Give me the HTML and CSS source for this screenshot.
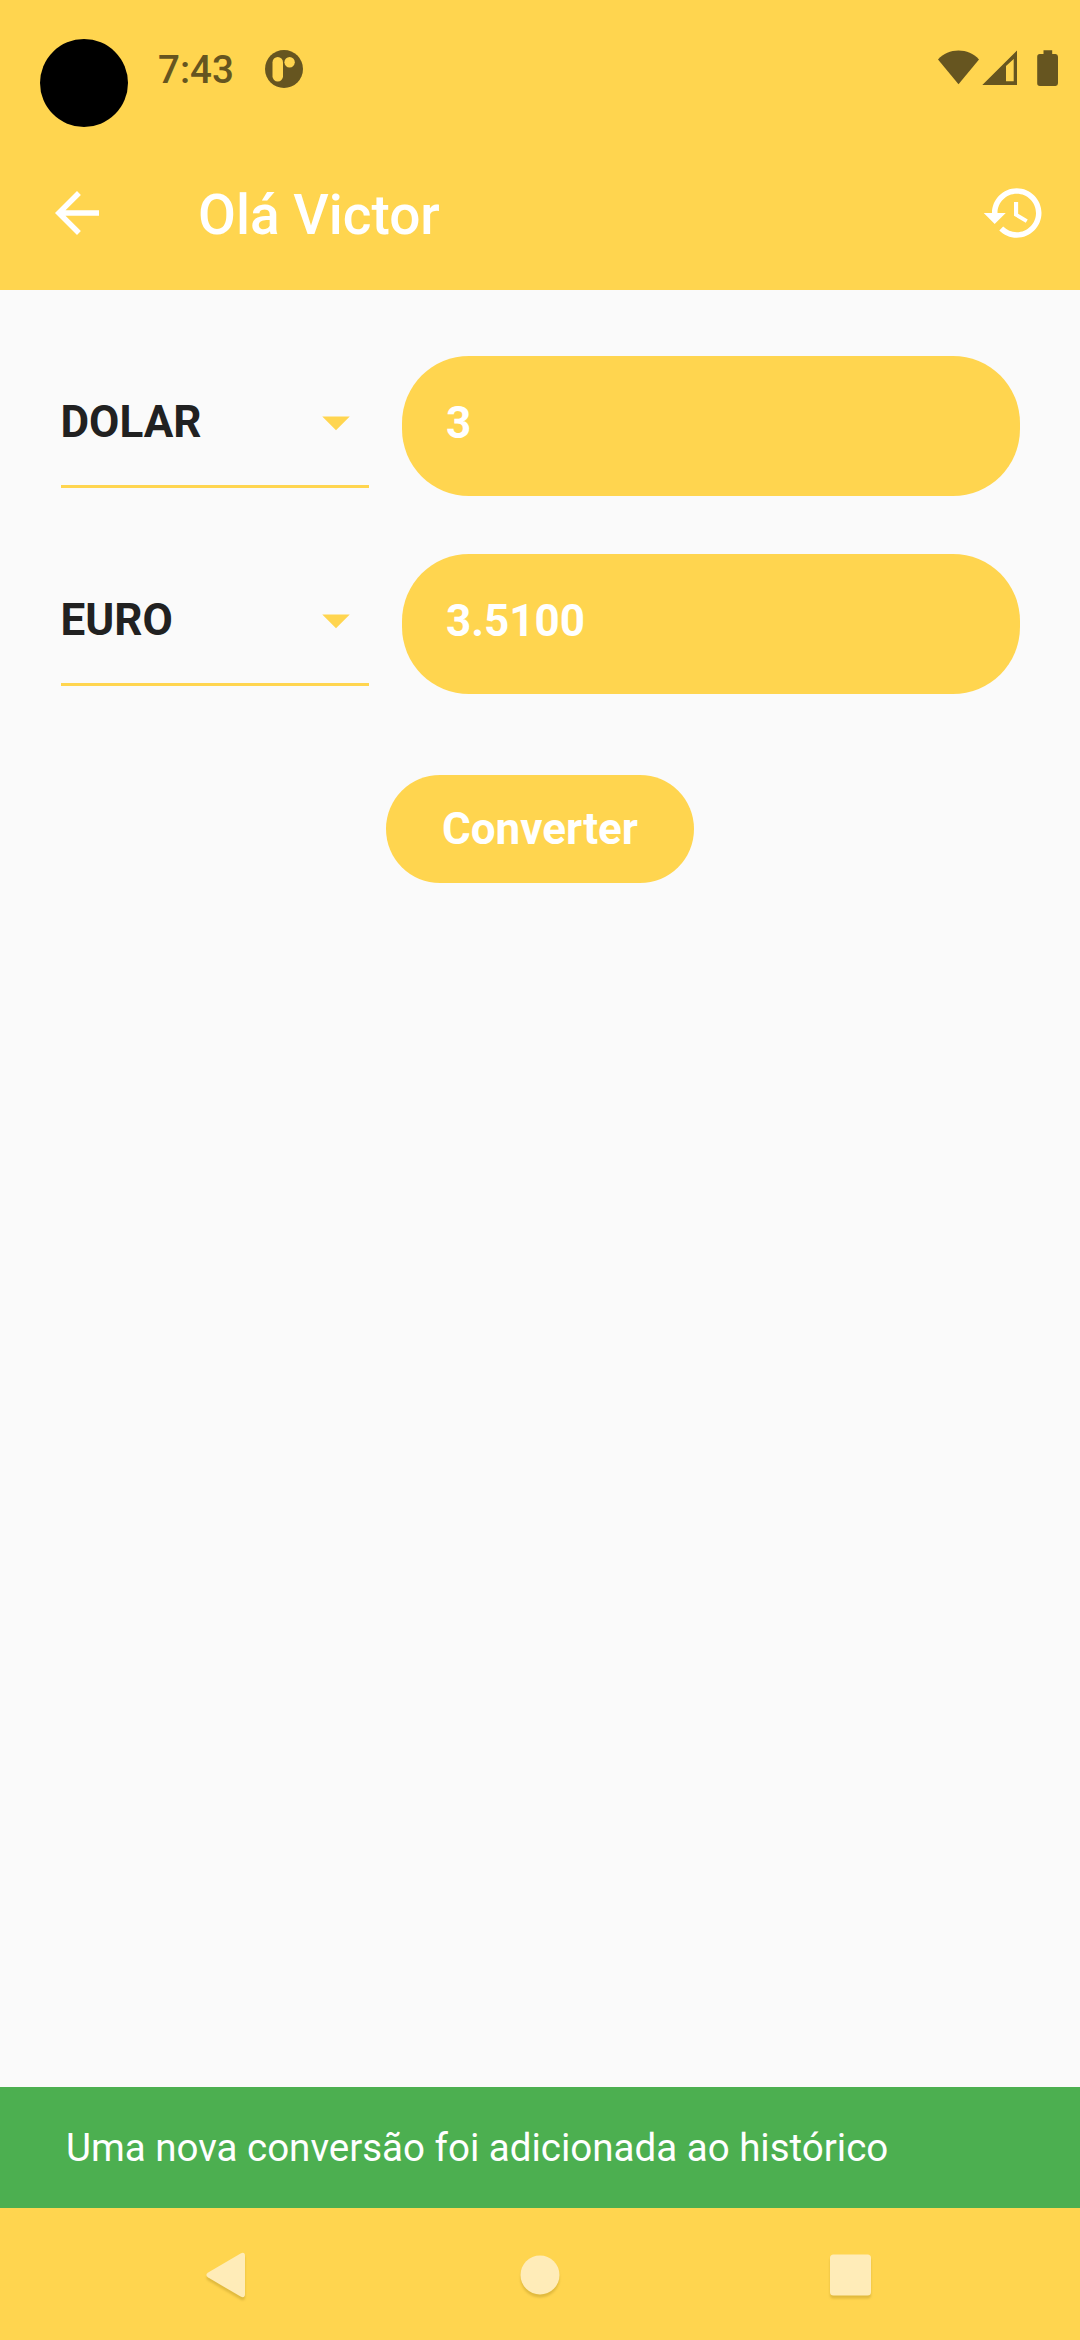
FILE: index.html
```html
<!DOCTYPE html>
<html lang="pt-BR">
<head>
<meta charset="utf-8">
<title>Conversor</title>
<link rel="stylesheet" href="styles.css">
</head>
<body>
<div class="screen">
  <header class="top">
    <div class="status-bar">
      <div class="camera"></div>
      <span class="time">7:43</span>
      <svg class="app-icon" width="38" height="38" viewBox="0 0 38 38">
        <circle class="status-ink" cx="19" cy="19" r="19"/>
        <rect class="cutout" x="7.5" y="7" width="10.5" height="24.5" rx="5.25"/>
        <circle class="cutout" cx="24.6" cy="12.2" r="5.2"/>
      </svg>
      <svg class="indicators" width="120" height="36" viewBox="0 0 120 36">
        <path class="status-ink" d="M0 9.6C5.5 3.500 12.500.6 20.500.6S35.500 3.500 41 9.600L20.500 34.300z"/>
        <path class="status-ink" fill-rule="evenodd" d="M79 .5V35H44.300zM75.700 9L68 16V31.200H75.700z"/>
        <path class="status-ink" d="M105.500.3h8.700v3.700h3.300a2.700 2.700 0 0 1 2.500 2.700v26.500a2.700 2.700 0 0 1-2.500 2.700h-15.600a2.700 2.700 0 0 1-2.700-2.700V6.700a2.700 2.700 0 0 1 2.700-2.700h3.600z"/>
      </svg>
    </div>
    <div class="app-bar">
      <svg class="icon" viewBox="0 0 24 24"><path d="M20 11H7.830l5.590-5.590L12 4l-8 8 8 8 1.410-1.410L7.830 13H20v-2z"/></svg>
      <h1 class="title">Olá Victor</h1>
      <svg class="icon" viewBox="0 0 24 24"><path d="M13 3c-4.970 0-9 4.030-9 9H1l3.890 3.890.07.14L9 12H6c0-3.870 3.130-7 7-7s7 3.130 7 7-3.130 7-7 7c-1.930 0-3.680-.79-4.940-2.060l-1.420 1.420C8.270 19.990 10.510 21 13 21c4.970 0 9-4.030 9-9s-4.030-9-9-9zm-1 5v5l4.280 2.540.72-1.210-3.500-2.080V8H12z"/></svg>
    </div>
  </header>
  <main class="content">
    <div class="row">
      <div class="select">
        <span>DOLAR</span>
        <svg class="icon" viewBox="0 0 24 24"><path class="caret" d="M7 10l5 5 5-5z"/></svg>
      </div>
      <div class="field">3</div>
    </div>
    <div class="row">
      <div class="select">
        <span>EURO</span>
        <svg class="icon" viewBox="0 0 24 24"><path class="caret" d="M7 10l5 5 5-5z"/></svg>
      </div>
      <div class="field">3.5100</div>
    </div>
    <button class="convert">Converter</button>
  </main>
  <div class="snackbar">Uma nova conversão foi adicionada ao histórico</div>
  <nav class="nav-bar">
    <svg class="nav-icon" viewBox="0 0 60 60"><path d="M9.200 27.400L41.600 8.400Q46 6.500 46 11V49Q46 53.500 41.600 51.600L9.200 32.600Q5.500 30 9.200 27.400z"/></svg>
    <svg class="nav-icon" viewBox="0 0 60 60"><circle cx="30" cy="30" r="19.500"/></svg>
    <svg class="nav-icon" viewBox="0 0 60 60"><rect x="9" y="9.500" width="41" height="41" rx="3.500"/></svg>
  </nav>
</div>
</body>
</html>
```
FILE: styles.css
```css
* { box-sizing: border-box; }

body {
  margin: 0;
  font-family: Roboto, "Noto Sans", sans-serif;
}

.screen {
  display: flex;
  flex-direction: column;
  width: 1080px;
  height: 2340px;
  background: #fafafa;
  overflow: hidden;
}

.top {
  height: 290px;
  background: #ffd54f;
}

.status-bar {
  display: flex;
  align-items: flex-start;
  height: 136px;
  padding: 39px 22px 0 40px;
}

.camera {
  width: 88px;
  height: 88px;
  border-radius: 50%;
  background: #000;
}

.time {
  margin-left: 30px;
  padding-top: 8px;
  font-size: 38.5px;
  line-height: 46px;
  font-weight: 500;
  color: #665520;
}

.app-icon { margin: 10.500px 0 0 31px; }
.indicators { margin: 11px 0 0 auto; }
.status-ink { fill: #665520; }
.cutout { fill: #ffd54f; }

.app-bar {
  display: flex;
  align-items: center;
  height: 154px;
  padding: 0 33px 0 44px;
}

.icon {
  flex: none;
  width: 66px;
  height: 66px;
  fill: #fff;
}

.title {
  flex: 1;
  margin: 0 0 0 88px;
  padding-top: 4px;
  font-size: 55px;
  line-height: 64px;
  font-weight: 500;
  color: #fff;
}

.content {
  display: flex;
  flex-direction: column;
  flex: 1;
  gap: 58px;
  padding: 66px 60.500px 0;
}

.row {
  display: flex;
  gap: 33px;
  height: 140px;
}

.select {
  display: flex;
  align-items: center;
  justify-content: space-between;
  width: 308.500px;
  height: 132px;
  padding-top: 3px;
  border-bottom: 3px solid #ffd54f;
  font-size: 44px;
  font-weight: 700;
  color: #212121;
}

.caret { fill: #ffd54f; }

.field {
  flex: 1;
  padding: 1px 44px 7px;
  border-radius: 67px;
  background: #ffd54f;
  font-size: 44px;
  line-height: 132px;
  font-weight: 700;
  color: #fff;
}

.convert {
  align-self: center;
  width: 308px;
  height: 108px;
  margin-top: 23px;
  padding: 0;
  border: 0;
  border-radius: 54px;
  background: #ffd54f;
  font: 700 44px/108px Roboto, "Noto Sans", sans-serif;
  color: #fff;
}

.snackbar {
  height: 121px;
  padding-left: 66px;
  background: #4caf50;
  font-size: 38.500px;
  line-height: 121px;
  color: #fff;
}

.nav-bar {
  display: flex;
  justify-content: space-between;
  height: 132px;
  padding: 36.500px 199px 0 199px;
  background: #ffd54f;
}

.nav-icon {
  width: 60px;
  height: 60px;
  fill: #ffecb8;
  filter: drop-shadow(0 3px 1px rgba(120, 90, 0, 0.22));
}
```
